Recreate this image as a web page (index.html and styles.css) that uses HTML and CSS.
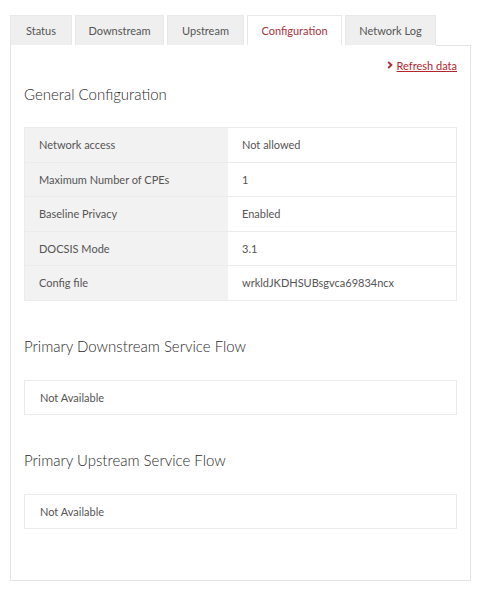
FILE: index.html
```html
<!DOCTYPE html>
<html>
<head>
<meta charset="utf-8">
<link rel="stylesheet" href="styles.css">
</head>
<body>
<div class="page">
  <div class="tabs">
    <div class="tab t-status">Status</div>
    <div class="tab t-down">Downstream</div>
    <div class="tab t-up">Upstream</div>
    <div class="tab t-conf active">Configuration</div>
    <div class="tab t-log">Network Log</div>
  </div>
  <div class="panel">
    <div class="refresh-row">
      <a class="refresh" href="#"><svg class="chev" width="6" height="8" viewBox="0 0 6 8"><path d="M1.2 1 L4.4 4 L1.2 7" fill="none" stroke="#b3262e" stroke-width="1.8"/></svg><span class="refresh-text">Refresh data</span></a>
    </div>
    <h2 class="heading h-general">General Configuration</h2>
    <div class="table">
      <div class="row"><div class="cell label">Network access</div><div class="cell value">Not allowed</div></div>
      <div class="row"><div class="cell label">Maximum Number of CPEs</div><div class="cell value">1</div></div>
      <div class="row"><div class="cell label">Baseline Privacy</div><div class="cell value">Enabled</div></div>
      <div class="row"><div class="cell label">DOCSIS Mode</div><div class="cell value">3.1</div></div>
      <div class="row"><div class="cell label">Config file</div><div class="cell value">wrkldJKDHSUBsgvca69834ncx</div></div>
    </div>
    <h2 class="heading h-flow">Primary Downstream Service Flow</h2>
    <div class="box">Not Available</div>
    <h2 class="heading h-flow">Primary Upstream Service Flow</h2>
    <div class="box">Not Available</div>
  </div>
</div>
</body>
</html>
```
FILE: styles.css
```css
html, body {
  margin: 0;
  padding: 0;
  background: #ffffff;
}
body {
  font-family: Lato, "Open Sans", Arial, sans-serif;
  color: #4a4a4a;
}
.page {
  padding: 15px 0 0 10px;
  width: 461px;
}
.tabs {
  display: flex;
  gap: 3px;
  height: 30px;
}
.tab {
  height: 30px;
  box-sizing: border-box;
  display: flex;
  align-items: center;
  justify-content: center;
  background: #efefef;
  border: 1px solid #e8e8e8;
  border-bottom: none;
  font-size: 11px;
  color: #555555;
}
.t-status { width: 62px; }
.t-down { width: 89px; }
.t-up { width: 77px; }
.t-conf { width: 95px; }
.t-log { width: 91px; }
.tab.active {
  background: #ffffff;
  color: #a8323a;
}
.panel {
  border: 1px solid #e4e4e4;
  border-top: none;
  height: 536px;
  box-sizing: border-box;
  padding: 0 13px 0 13px;
  position: relative;
}
.panel::before {
  content: "";
  position: absolute;
  top: 0;
  left: 425px;
  right: 0;
  border-top: 1px solid #e4e4e4;
}
.refresh-row {
  display: flex;
  justify-content: flex-end;
  padding-top: 13px;
  height: 14px;
}
.refresh {
  display: flex;
  align-items: center;
  gap: 4px;
  color: #b3262e;
  font-size: 11px;
  text-decoration: none;
}
.refresh-text {
  text-decoration: underline;
}
.heading {
  margin: 0;
  font-weight: 300;
  color: #2a2a2a;
  font-size: 15px;
}
.h-general {
  margin-top: 12px;
  height: 20px;
  line-height: 20px;
  margin-bottom: 23px;
}
.table {
  border: 1px solid #ebebeb;
}
.row {
  display: flex;
  height: 34.5px;
  border-top: 1px solid #ebebeb;
  box-sizing: border-box;
}
.row:first-child {
  border-top: none;
  height: 33.5px;
}
.cell {
  display: flex;
  align-items: center;
  font-size: 11px;
  color: #555555;
}
.label {
  width: 203px;
  background: #f2f2f2;
  padding-left: 14px;
  box-sizing: border-box;
}
.value {
  flex: 1;
  padding-left: 14px;
}
.h-flow {
  margin-top: 35px;
  height: 20px;
  line-height: 20px;
  margin-bottom: 24px;
}
.box {
  height: 35px;
  box-sizing: border-box;
  border: 1px solid #ebebeb;
  display: flex;
  align-items: center;
  padding-left: 15px;
  font-size: 11px;
  color: #555555;
}
```
